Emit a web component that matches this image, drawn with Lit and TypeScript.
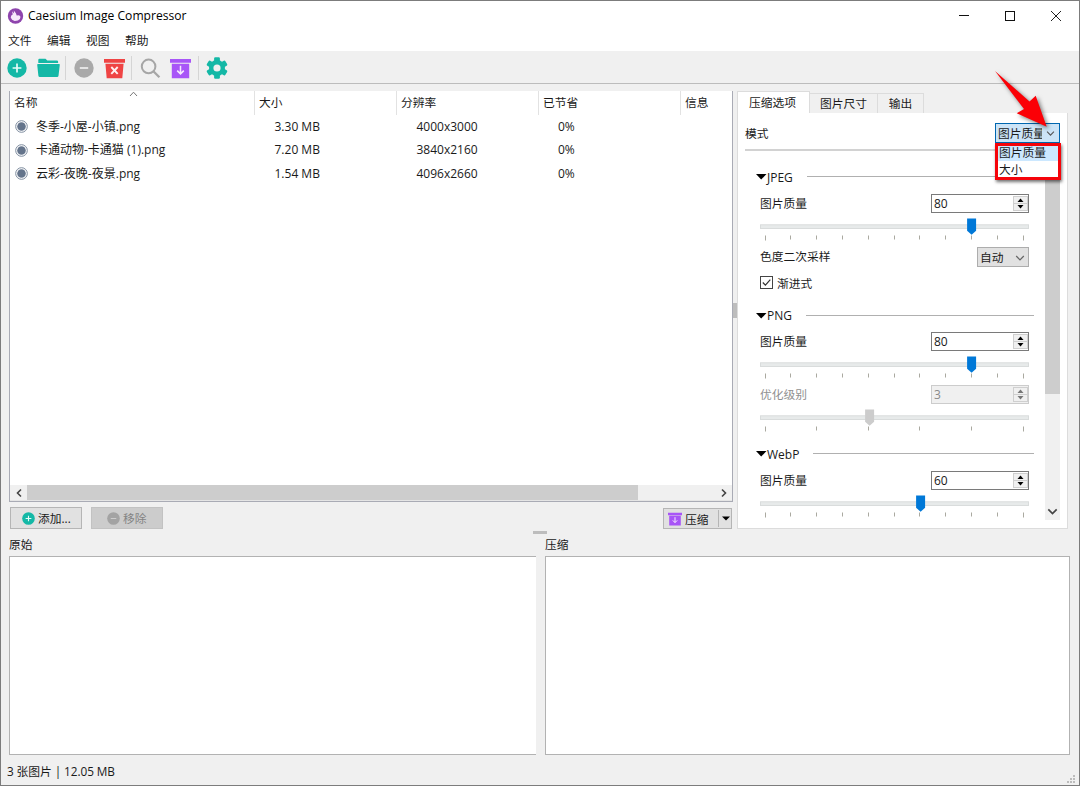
import { LitElement, html, css, svg, nothing } from "lit";
import { customElement, property } from "lit/decorators.js";

const plusIcon = (s: number) => html`<svg width=${s} height=${s} viewBox="0 0 20 20">
  <circle cx="10" cy="10" r="9.7" fill="#14b8a6" />
  <path d="M10 5.6v8.8M5.6 10h8.8" stroke="#e8fbf8" stroke-width="1.7" />
</svg>`;

const minusIcon = (s: number, disabled = false) => html`<svg width=${s} height=${s} viewBox="0 0 20 20">
  <circle cx="10" cy="10" r="9.7" fill=${disabled ? "#a3a3a3" : "#a9a9a9"} />
  <path d="M5.8 10h8.4" stroke=${disabled ? "#cccccc" : "#f3f3f3"} stroke-width="1.6" />
</svg>`;

const boxIcon = (w: number, color: string, glyph: unknown) => html`<svg width=${w} height=${w} viewBox="0 0 21 21">
  <path d="M0 1h21v3.8H0zM1.8 5.8h17.4V20.2H1.8z" fill=${color} />
  ${glyph}
</svg>`;

const archiveGlyph = svg`<path d="M10.5 7.8v8M7.2 12.6l3.3 3.3 3.3-3.3" fill="none" stroke="#f6eaff" stroke-width="1.5" />`;

const chevron = (w: number, color: string, sw = 1.2) => html`<svg width=${w} height=${w} viewBox="0 0 10 10">
  <path d="M1.2 3l3.8 3.9L8.8 3" fill="none" stroke=${color} stroke-width=${sw} />
</svg>`;

@customElement("cic-spin")
class CicSpin extends LitElement {
  @property({ type: Number }) value = 0;
  @property({ type: Boolean, reflect: true }) disabled = false;

  static styles = css`
    :host {
      display: flex;
      box-sizing: border-box;
      width: 98px;
      height: 19px;
      border: 1px solid #7a7a7a;
      background: #fff;
      align-items: stretch;
      padding: 0 0 0 2px;
    }
    :host([disabled]) {
      border-color: #cccccc;
      background: #f0f0f0;
      color: #8a8a8a;
    }
    .value {
      flex: 1;
      line-height: 18px;
      font-size: 12px;
    }
    .buttons {
      display: flex;
      flex-direction: column;
      width: 15px;
      padding: 1px 0;
    }
    .btn {
      flex: 1;
      display: flex;
      align-items: center;
      justify-content: center;
      background: #f0f0f0;
      border: 1px solid #cfcfcf;
      box-sizing: border-box;
    }
    .btn + .btn {
      border-top: 0;
    }
    svg {
      display: block;
    }
  `;

  render() {
    const c = this.disabled ? "#777" : "#000";
    return html`
      <span class="value">${this.value}</span>
      <span class="buttons">
        <span class="btn"><svg width="7" height="4" viewBox="0 0 7 4"><path d="M.5 4h6L3.5.5z" fill=${c} /></svg></span>
        <span class="btn"><svg width="7" height="4" viewBox="0 0 7 4"><path d="M.5 0h6L3.5 3.5z" fill=${c} /></svg></span>
      </span>
    `;
  }
}

@customElement("cic-slider")
class CicSlider extends LitElement {
  @property({ type: Number }) position = 0;
  @property({ type: Number }) ticks = 11;
  @property({ type: Boolean }) disabled = false;

  static styles = css`
    :host {
      display: block;
      width: 269px;
      height: 25px;
    }
    svg {
      display: block;
    }
  `;

  render() {
    const x = 5 + this.position * 258;
    const marks = Array.from({ length: this.ticks }, (_, i) => Math.floor(5 + (i * 258) / (this.ticks - 1)));
    return html`<svg width="269" height="25">
      <rect x=".5" y="6.8" width="268" height="3.7" fill="#e7eaea" stroke="#d9dcdc" />
      ${marks.map((m, i) => svg`<rect x=${m} y="17.5" width="1" height=${i === 0 || i === marks.length - 1 ? 5 : 4} fill="#aaa9a0" />`)}
      <path transform="translate(${Math.round(x) + 0.6} 0)" d="M-4.5 .5h9v12.2L0 16.8l-4.5-4.1z" fill=${this.disabled ? "#cccccc" : "#0078d7"} />
    </svg>`;
  }
}

interface Entry {
  name: string;
  size: string;
  resolution: string;
  saved: string;
}

@customElement("app-root")
class AppRoot extends LitElement {
  static styles = css`
    :host {
      display: block;
      font-family: "Open Sans", "Noto Sans CJK SC", sans-serif;
      font-size: 11.75px;
      color: #1a1a1a;
      white-space: nowrap;
    }
    * {
      box-sizing: border-box;
    }
    svg {
      display: block;
      flex: none;
    }
    .window {
      position: relative;
      width: 1080px;
      height: 786px;
      border: 1px solid #7c7c7c;
      background: #f0f0f0;
      display: flex;
      flex-direction: column;
      overflow: hidden;
    }
    .window > * {
      flex: none;
    }
    .title {
      height: 29px;
      background: #fff;
      display: flex;
      align-items: center;
      padding: 0 17px 0 6px;
    }
    .title-text {
      margin-left: 4px;
      flex: 1;
      font-size: 12.1px;
      color: #000;
    }
    .window-buttons {
      display: flex;
      gap: 34px;
    }
    .menu {
      height: 21px;
      background: #fff;
      display: flex;
      gap: 15.5px;
      padding-left: 7px;
      line-height: 20px;
    }
    .toolbar {
      height: 33px;
      border-bottom: 1px solid #bcbcbc;
      display: grid;
      grid-template-columns: 29.5px 28.5px 9px 30px 27px 8.5px 30.5px 28px 7.5px 22px;
      align-items: center;
      padding: 2px 0 0 6px;
    }
    .sep {
      width: 1px;
      height: 24px;
      background: #d5d5d5;
    }
    .workspace {
      height: 446px;
      display: flex;
      padding: 7px 0 0 8px;
    }
    .files {
      width: 724px;
      display: flex;
      flex-direction: column;
    }
    .table {
      height: 411px;
      border: 1px solid #a9abb5;
      border-top: 0;
      background: #fff;
      display: flex;
      flex-direction: column;
    }
    .row {
      display: grid;
      grid-template-columns: 245px 142px 142px 142px 1fr;
      height: 23.5px;
      align-items: center;
      font-size: 12px;
    }
    .head {
      height: 24px;
      align-items: stretch;
      line-height: 23px;
      font-size: 11.75px;
    }
    .cell {
      padding-left: 4px;
      border-right: 1px solid #e2e2e2;
      position: relative;
    }
    .cell:last-child {
      border: 0;
    }
    .sort {
      position: absolute;
      left: 119px;
      top: 0;
    }
    .name {
      display: flex;
      align-items: center;
      gap: 8px;
      padding-left: 5px;
    }
    .name-text {
      padding-bottom: 2px;
    }
    .num {
      padding: 0 0 1px 19.5px;
    }
    .saved {
      padding: 0 0 1px 19px;
    }
    .grow {
      flex: 1;
    }
    .hbar {
      height: 16px;
      display: grid;
      grid-template-columns: 17px 611px 1fr 17px;
      align-items: center;
      background: #f0f0f0;
      border-bottom: 1px solid #e5e5e5;
    }
    .hbar svg {
      justify-self: center;
    }
    .thumb {
      height: 100%;
      background: #cdcdcd;
    }
    .actions {
      display: flex;
      gap: 9px;
      padding: 5px 1px 0 1px;
      height: 28px;
    }
    .button {
      width: 72px;
      height: 22px;
      border: 1px solid #b5b5b5;
      background: #e1e1e1;
      display: flex;
      align-items: center;
      padding-left: 11px;
      gap: 3px;
    }
    .button span {
      margin-top: -1px;
    }
    .button.off {
      background: #cccccc;
      border-color: #c2c2c2;
      color: #838383;
      padding-left: 15px;
    }
    .button.split {
      margin-left: auto;
      margin-top: 1px;
      width: 69px;
      height: 21px;
      padding: 0 1px 0 4px;
    }
    .button .split-line {
      flex: none;
      width: 1px;
      height: 17px;
      background: #b5b5b5;
      margin: 0 0 0 6px;
    }
    .handle-v {
      width: 4px;
      height: 15px;
      background: #bdbdbd;
      margin: 212px 0 0 0;
    }
    .options {
      width: 331px;
      display: flex;
      flex-direction: column;
    }
    .tabs {
      display: flex;
      height: 22px;
      align-items: flex-end;
    }
    .tab {
      height: 20px;
      border: 1px solid #dcdcdc;
      border-left: 0;
      border-bottom: 0;
      background: #f0f0f0;
      text-align: center;
      line-height: 18px;
    }
    .tab.active {
      height: 22px;
      line-height: 20px;
      background: #fff;
      border-left: 1px solid #dcdcdc;
      padding-right: 2px;
    }
    .panel {
      height: 416px;
      background: #fff;
      border: 1px solid #dcdcdc;
      border-top: 0;
      padding: 0 7px;
    }
    .mode {
      height: 38px;
      display: flex;
      align-items: center;
      justify-content: space-between;
      border-bottom: 2px solid #d2d2d2;
      padding-top: 4px;
    }
    .combo {
      width: 65px;
      height: 20px;
      border: 1px solid #0067b0;
      background: #cce4f7;
      display: flex;
      align-items: center;
      padding: 0 4px 0 2px;
      justify-content: space-between;
    }
    .combo-text {
      width: 44px;
      overflow: hidden;
      line-height: 18px;
    }
    .combo.plain {
      width: 52px;
      height: 20px;
      border-color: #adadad;
      background: #e1e1e1;
      padding: 0 3px 0 2px;
    }
    .plain .combo-text {
      width: 26px;
    }
    .combo svg {
      margin-top: 1px;
    }
    .scroll {
      height: 369px;
      display: flex;
      overflow: hidden;
    }
    .groups {
      width: 300px;
      padding-top: 14px;
      display: flex;
      flex-direction: column;
    }
    .group {
      height: 139px;
      flex: none;
    }
    .group.short {
      height: 138px;
    }
    .group-head {
      height: 24px;
      padding: 0 11px;
      display: flex;
      align-items: center;
      font-size: 12px;
    }
    .short .group-head span:not(.rule) {
      padding-bottom: 2px;
    }
    .rule {
      height: 1px;
      background: #b0b0b0;
      flex: 1;
      margin: 0 0 2px 14px;
    }
    .field {
      height: 29px;
      padding: 0 16px 0 15px;
      display: flex;
      justify-content: space-between;
      align-items: center;
    }
    .field.low {
      height: 28px;
    }
    .field.low cic-spin {
      margin-bottom: 1px;
    }
    .field.low .label {
      padding-bottom: 3px;
    }
    .field.dim {
      color: #909090;
    }
    .label {
      padding-bottom: 2px;
    }
    cic-slider {
      margin-left: 15px;
    }
    .check {
      height: 23px;
      padding-left: 15px;
      display: flex;
      gap: 4px;
      align-items: center;
    }
    .vbar {
      width: 15px;
      background: #f0f0f0;
      display: flex;
      flex-direction: column;
      align-items: center;
      justify-content: space-between;
      padding-bottom: 3px;
    }
    .vthumb {
      width: 15px;
      height: 243px;
      background: #cdcdcd;
    }
    .handle-h {
      width: 14px;
      height: 3px;
      margin: 1px 0 0 532px;
      background: #bdbdbd;
    }
    .previews {
      display: grid;
      grid-template-columns: 527px 525px;
      column-gap: 9px;
      padding-left: 8px;
    }
    .caption {
      line-height: 21px;
      height: 22px;
    }
    .preview {
      height: 199px;
      background: #fff;
      border: 1px solid #b2b2b2;
    }
    .preview.left {
      border-right: 0;
    }
    .status {
      height: 30px;
      display: flex;
      align-items: center;
      justify-content: space-between;
      padding-left: 6px;
      font-size: 11.8px;
      word-spacing: -0.3px;
    }
    .grip {
      align-self: flex-end;
      margin: 0 3px 1px 0;
    }
    .popup {
      position: absolute;
      left: 994px;
      top: 142px;
      width: 66px;
      height: 37px;
      border: 3px solid #f5040a;
      background: #fff;
      box-shadow: 1px 2px 3px rgba(0, 0, 0, 0.55);
    }
    .option {
      height: 15px;
      line-height: 13px;
      padding-left: 1px;
    }
    .option.current {
      background: #cce8ff;
    }
    .option + .option {
      line-height: 17px;
    }
    .arrow {
      position: absolute;
      left: 985px;
      top: 63px;
      filter: drop-shadow(2px 2px 2px rgba(0, 0, 0, 0.5));
    }
  `;

  private entries: Entry[] = [
    { name: "冬季-小屋-小镇.png", size: "3.30 MB", resolution: "4000x3000", saved: "0%" },
    { name: "卡通动物-卡通猫 (1).png", size: "7.20 MB", resolution: "3840x2160", saved: "0%" },
    { name: "云彩-夜晚-夜景.png", size: "1.54 MB", resolution: "4096x2660", saved: "0%" },
  ];

  private header(name: string) {
    return html`<div class="group-head">
      <svg width="11" height="6" viewBox="0 0 11 6"><path d="M0 0h10.5L5.2 5.5z" fill="#000" /></svg>
      <span>${name}</span><span class="rule"></span>
    </div>`;
  }

  private quality(value: number, low = false) {
    return html`<div class="field ${low ? "low" : ""}"><span class="label">图片质量</span><cic-spin .value=${value}></cic-spin></div>
      <cic-slider .position=${value / 100}></cic-slider>`;
  }

  private toolbar() {
    return html`<div class="toolbar">
      ${plusIcon(20)}
      <svg width="23" height="20" viewBox="0 0 23 20">
        <path d="M1.3 5V2q0-1.2 1.2-1.2h6L10.3 2.4h9.6q1.2 0 1.2 1.2V5z" fill="#14b8a6" />
        <path d="M.9 5.9h21.2q.8 0 .7.8l-1.3 11q-.2 1.3-1.4 1.3H2.8q-1.2 0-1.4-1.3L.2 6.7q0-.8.7-.8z" fill="#14b8a6" />
      </svg>
      <span class="sep"></span>
      <span>${minusIcon(20)}</span>
      <svg width="21" height="21" viewBox="0 0 21 21">
        <path d="M0 1h21v3.8H0zM1.4 5.8h18.2L18.3 20.2H2.7z" fill="#ef4444" />
        <path d="M7.3 9l6.4 6.8M13.7 9l-6.4 6.8" stroke="#fff0f0" stroke-width="1.9" />
      </svg>
      <span class="sep"></span>
      <svg width="21" height="21" viewBox="0 0 21 21">
        <circle cx="8.6" cy="8.4" r="6.8" fill="none" stroke="#a6a6a6" stroke-width="2" />
        <path d="M13.6 13.5l5.8 5.8" stroke="#a6a6a6" stroke-width="2.3" />
      </svg>
      ${boxIcon(21, "#a855f7", archiveGlyph)}
      <span class="sep"></span>
      <svg width="22" height="22" viewBox="0 0 22 22">
        <g fill="#14b8a6">
          ${[0, 60, 120].map((a) => svg`<rect x="8.1" y=".3" width="5.8" height="21.4" rx="1.2" transform="rotate(${a} 11 11)" />`)}
          <circle cx="11" cy="11" r="8" />
        </g>
        <circle cx="11" cy="11" r="3.6" fill="#f0f0f0" />
      </svg>
    </div>`;
  }

  render() {
    return html`<div class="window">
      <div class="title">
        <svg width="17" height="16" viewBox="0 0 16 16">
          <circle cx="8" cy="8" r="7.7" fill="#8e44ad" />
          <path d="M4.6 3.2L6.6 5.4 6.3 2.4 8.4 5.2 9.2 7.4 11.6 7.3 13 8.8 12.4 11 10.4 12.6 7.2 13 4.6 11.8 3.2 9.6 3.8 7.6 5.2 6.4z" fill="#f8eafc" />
        </svg>
        <span class="title-text">Caesium Image Compressor</span>
        <div class="window-buttons">
          <svg width="12" height="12"><path d="M1 5.5h10" stroke="#111" /></svg>
          <svg width="12" height="12"><rect x="1.5" y="1.5" width="9" height="9" fill="none" stroke="#111" /></svg>
          <svg width="12" height="12" viewBox="0 0 12 12"><path d="M1 1l10 10M11 1L1 11" stroke="#222" stroke-width="1" /></svg>
        </div>
      </div>
      <div class="menu">${["文件", "编辑", "视图", "帮助"].map((m) => html`<span>${m}</span>`)}</div>
      ${this.toolbar()}
      <div class="workspace">
        <div class="files">
          <div class="table">
            <div class="row head">
              ${["名称", "大小", "分辨率", "已节省", "信息"].map(
                (h, i) => html`<div class="cell">
                  ${h}${i === 0
                    ? html`<svg class="sort" width="9" height="6"><path d="M1 5l3.5-3.8L8 5" fill="none" stroke="#777" /></svg>`
                    : nothing}
                </div>`
              )}
            </div>
            ${this.entries.map(
              (e) => html`<div class="row">
                <span class="name">
                  <svg width="13" height="13" viewBox="0 0 13 13">
                    <circle cx="6.5" cy="6.5" r="5.8" fill="none" stroke="#7c8a9d" stroke-width="1" />
                    <circle cx="6.5" cy="6.5" r="4.3" fill="#64748b" />
                  </svg>
                  <span class="name-text">${e.name}</span>
                </span>
                <span class="num">${e.size}</span>
                <span class="num">${e.resolution}</span>
                <span class="saved">${e.saved}</span>
              </div>`
            )}
            <div class="grow"></div>
            <div class="hbar">
              <svg width="8" height="10"><path d="M6 1.5L2.5 5 6 8.5" fill="none" stroke="#444" stroke-width="1.6" /></svg>
              <span class="thumb"></span><span></span>
              <svg width="8" height="10"><path d="M2 1.5L5.5 5 2 8.5" fill="none" stroke="#444" stroke-width="1.6" /></svg>
            </div>
          </div>
          <div class="actions">
            <div class="button">${plusIcon(13)}<span>添加...</span></div>
            <div class="button off">${minusIcon(13, true)}<span>移除</span></div>
            <div class="button split">
              ${boxIcon(14, "#a855f7", archiveGlyph)}<span>压缩</span><span class="split-line"></span>
              <svg width="8" height="5"><path d="M0 .5h8L4 4.5z" fill="#000" /></svg>
            </div>
          </div>
        </div>
        <div class="handle-v"></div>
        <div class="options">
          <div class="tabs">
            <div class="tab active" style="width:73px">压缩选项</div>
            <div class="tab" style="width:68px">图片尺寸</div>
            <div class="tab" style="width:46px">输出</div>
          </div>
          <div class="panel">
            <div class="mode">
              <span class="label">模式</span>
              <div class="combo"><span class="combo-text">图片质量</span>${chevron(9, "#555")}</div>
            </div>
            <div class="scroll">
              <div class="groups">
                <div class="group">
                  ${this.header("JPEG")} ${this.quality(80)}
                  <div class="field low">
                    <span class="label">色度二次采样</span>
                    <div class="combo plain"><span class="combo-text">自动</span>${chevron(10, "#666")}</div>
                  </div>
                  <div class="check">
                    <svg width="13" height="13"><rect x=".5" y=".5" width="12" height="12" fill="#fff" stroke="#444" /><path d="M2.8 6.5l2.6 2.7L10.3 3.6" fill="none" stroke="#333" stroke-width="1.2" /></svg>
                    <span>渐进式</span>
                  </div>
                </div>
                <div class="group short">
                  ${this.header("PNG")} ${this.quality(80, true)}
                  <div class="field low dim"><span class="label">优化级别</span><cic-spin .value=${3} disabled></cic-spin></div>
                  <cic-slider .position=${0.403} .ticks=${6} disabled></cic-slider>
                </div>
                <div class="group">${this.header("WebP")} ${this.quality(60)}</div>
              </div>
              <div class="vbar"><span class="vthumb"></span>${chevron(11, "#444", 1.5)}</div>
            </div>
          </div>
        </div>
      </div>
      <div class="handle-h"></div>
      <div class="previews">
        <div class="caption">原始</div>
        <div class="caption">压缩</div>
        <div class="preview left"></div>
        <div class="preview"></div>
      </div>
      <div class="status">
        <span>3 张图片 | 12.05 MB</span>
        <svg class="grip" width="10" height="10">
          ${[[7, 0], [4, 3], [7, 3], [1, 6], [4, 6], [7, 6]].map(([x, y]) => svg`<rect x=${x} y=${y + 1} width="2" height="2" fill="#bcbcbc" />`)}
        </svg>
      </div>
      <div class="popup">
        <div class="option current">图片质量</div>
        <div class="option">大小</div>
      </div>
      <svg class="arrow" width="75" height="75" viewBox="986 64 75 75">
        <path d="M995 71L1029.5 101.5 1035.7 95.7 1046.7 126.7 1016.7 113.3 1024 109z" fill="#fb0006" />
      </svg>
    </div>`;
  }
}
